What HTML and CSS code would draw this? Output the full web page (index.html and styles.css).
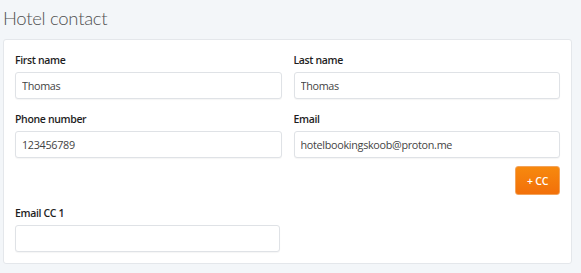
FILE: index.html
```html
<!DOCTYPE html>
<html lang="en">
<head>
    <meta charset="UTF-8">
    <title>Hotel contact</title>
    <link rel="stylesheet" href="styles.css">
</head>
<body>
    <div class="page">
        <h2 class="title">Hotel contact</h2>
        <div class="card">
            <div class="row">
                <div class="field">
                    <label>First name</label>
                    <input type="text" value="Thomas">
                </div>
                <div class="field">
                    <label>Last name</label>
                    <input type="text" value="Thomas">
                </div>
            </div>
            <div class="row">
                <div class="field">
                    <label>Phone number</label>
                    <input type="text" value="123456789">
                </div>
                <div class="field">
                    <label>Email</label>
                    <input type="text" value="hotelbookingskoob@proton.me">
                </div>
            </div>
            <div class="actions">
                <button class="btn-cc">+ CC</button>
            </div>
            <div class="row">
                <div class="field narrow">
                    <label>Email CC 1</label>
                    <input type="text" value="">
                </div>
            </div>
        </div>
    </div>
</body>
</html>
```

FILE: styles.css
```css
body {
    margin: 0;
    font-family: "Open Sans", "Noto Sans", sans-serif;
    background: #f3f6f9;
    color: #212529;
}
.page {
    padding: 3px 9px 0 3px;
}
.title {
    margin: 0;
    height: 36px;
    font-family: Lato, "Open Sans", sans-serif;
    font-size: 18.5px;
    font-weight: 300;
    letter-spacing: -0.3px;
    line-height: 30px;
    color: #505050;
}
.card {
    background: #fff;
    border: 1px solid #e4e7eb;
    border-radius: 3px;
    padding: 11px;
}
.row {
    display: grid;
    grid-template-columns: 1fr 1fr;
    gap: 12px;
    margin-bottom: 11px;
}
.row:last-child {
    margin-bottom: 0;
}
.field label {
    display: block;
    font-size: 10.5px;
    font-weight: 600;
    letter-spacing: -0.35px;
    line-height: 18px;
    margin-bottom: 3px;
    color: #1e1e1e;
}
.field input {
    display: block;
    box-sizing: border-box;
    width: 100%;
    height: 27px;
    padding: 0 6px;
    font-family: inherit;
    font-size: 10.8px;
    letter-spacing: -0.3px;
    color: #444;
    border: 1px solid #dfe2e6;
    border-radius: 3px;
    box-shadow: 0 1px 1px rgba(0, 0, 0, 0.04);
    outline: none;
}
.narrow input {
    width: calc(100% - 2px);
}
.actions {
    display: flex;
    justify-content: flex-end;
    margin: -3px 0 9px;
}
.btn-cc {
    width: 45px;
    height: 29px;
    font-family: inherit;
    font-size: 10.5px;
    font-weight: 600;
    letter-spacing: -0.2px;
    color: #fff;
    background: linear-gradient(#f7890e, #f2700a);
    border: 1px solid #f3a35a;
    border-radius: 3px;
}
```
